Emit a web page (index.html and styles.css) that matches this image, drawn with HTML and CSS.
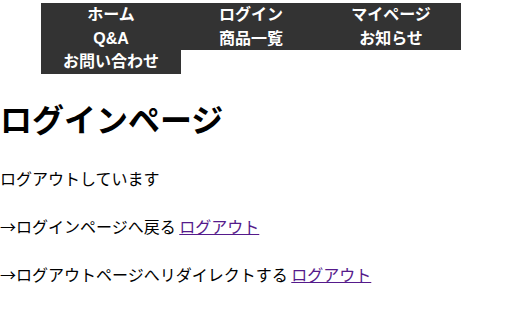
FILE: index.html
```html
<!DOCTYPE html>
<html lang="ja">
<head>
<meta charset="utf-8"/>
<title>ログインページ</title>
<link rel="stylesheet" href="styles.css">
</head>
<body>
<nav>
<ul class="menu">
<li><a href="#">ホーム</a></li>
<li><a href="#">ログイン</a></li>
<li><a href="#">マイページ</a></li>
<li><a href="#">Q&amp;A</a></li>
<li><a href="#">商品一覧</a></li>
<li><a href="#">お知らせ</a></li>
<li><a href="#">お問い合わせ</a></li>
</ul>
</nav>
<h1>ログインページ</h1>
<p>ログアウトしています</p>
<p>→ログインページへ戻る <a class="link" href="#">ログアウト</a></p>
<p>→ログアウトページへリダイレクトする <a class="link" href="#">ログアウト</a></p>
</body>
</html>
```

FILE: styles.css
```css
body {
  margin: 0;
  font-family: "Noto Sans CJK JP", "Noto Sans", sans-serif;
  color: #000;
  background: white;
}
.menu {
  list-style: none;
  display: flex;
  flex-wrap: wrap;
  width: 420px;
  margin: 3px 0 0 41px;
  padding: 0;
  font-family: "Liberation Sans", "Noto Sans CJK JP", sans-serif;
}
.menu li {
  width: 140px;
  background: #333;
  text-align: center;
  line-height: 23.7px;
}
.menu a {
  color: white;
  font-weight: bold;
  text-decoration: none;
}
h1 {
  font-size: 32px;
  margin: 21px 0;
}
p {
  font-size: 16px;
  line-height: 32px;
  margin: 16px 0;
}
a.link {
  color: #551a8b;
}
```
